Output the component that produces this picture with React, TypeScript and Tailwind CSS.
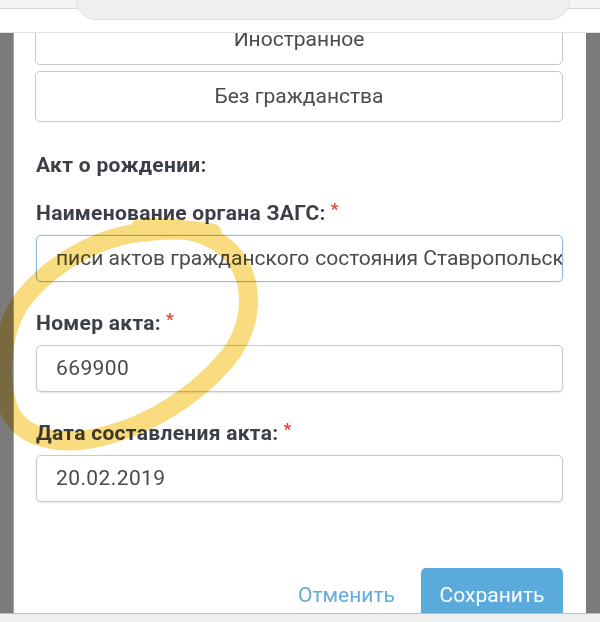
import React from "react";

const font = { fontFamily: "Roboto, 'Noto Sans', sans-serif" };

function Label({ text, required }: { text: string; required?: boolean }) {
    return (
        <div className="h-[28px] flex items-center text-[21px] font-bold text-[#3b4048] leading-none tracking-[0.3px]">
            {text}
            {required && <span className="ml-[5px] text-[#e2463b] text-[17px] self-start mt-[2px]">*</span>}
        </div>
    );
}

function Field({ value }: { value: string }) {
    return (
        <div className="h-[47px] rounded-[5px] border border-[#c6c9cd] shadow-[0_1px_2px_rgba(0,0,0,0.12)] bg-white flex items-center pl-[19px] text-[21px] text-[#4b4b4b] tracking-[0.4px]">
            {value}
        </div>
    );
}

export default function App() {
    return (
        <div className="w-[600px] h-[622px] relative overflow-hidden bg-white flex flex-col" style={font}>
            {/* browser top */}
            <div className="h-[33px] relative bg-white border-b border-[#e2e2e2] shrink-0">
                <div className="h-[9px] bg-[#f4f4f4] border-b border-[#dadada]"></div>
                <div className="absolute left-[76px] w-[494px] top-[-22px] h-[42px] rounded-[20px] bg-[#f0f0f0] border border-[#dedede]"></div>
            </div>

            <div className="flex-1 flex min-h-0">
                <div className="w-[14px] bg-[#7b7b7b] border-r border-[#a4a4a4]"></div>

                {/* modal */}
                <div className="flex-1 bg-white overflow-hidden pl-[22px] pr-[23px]">
                    <div className="mt-[-19px] flex flex-col gap-[6px] -ml-[1px]">
                        <div className="h-[51px] rounded-[5px] border border-[#c4c7cc] flex items-center justify-center text-[21px] text-[#4b4b4b]">
                            Иностранное
                        </div>
                        <div className="h-[51px] rounded-[5px] border border-[#c4c7cc] flex items-center justify-center text-[21px] text-[#4b4b4b]">
                            Без гражданства
                        </div>
                    </div>

                    <div className="mt-[29px]">
                        <Label text="Акт о рождении:" />
                    </div>

                    <div className="mt-[20px]">
                        <Label text="Наименование органа ЗАГС:" required />
                    </div>
                    <div className="mt-[8px] h-[47px] rounded-[5px] border border-[#93bedb] shadow-[0_0_2px_rgba(90,160,210,0.35)] bg-white flex items-center pl-[19px] pr-[7px] text-[21px] text-[#4b4b4b] overflow-hidden whitespace-nowrap">
                        <span>писи актов гражданского</span>
                        <span className="inline-block w-px h-[26px] bg-[#b8cfe0] ml-[1px] mr-[5px]"></span>
                        <span>состояния Ставропольского края</span>
                    </div>

                    <div className="mt-[27px]">
                        <Label text="Номер акта:" required />
                    </div>
                    <div className="mt-[8px]">
                        <Field value="669900" />
                    </div>

                    <div className="mt-[27px]">
                        <Label text="Дата составления акта:" required />
                    </div>
                    <div className="mt-[8px]">
                        <Field value="20.02.2019" />
                    </div>

                    <div className="mt-[66px] flex justify-end items-stretch gap-[26px]">
                        <button className="text-[21px] text-[#62acd9] h-[48px] flex items-center pt-[8px]">Отменить</button>
                        <button className="w-[142px] h-[48px] rounded-t-[5px] bg-[#5aaadc] text-white text-[21px] flex items-center justify-center pt-[8px]">
                            Сохранить
                        </button>
                    </div>
                </div>

                <div className="w-[14px] bg-[#7b7b7b]"></div>
            </div>

            <div className="h-[9px] bg-[#efefef] border-t border-[#bdbdbd] shrink-0"></div>

            {/* highlighter mark */}
            <svg className="absolute inset-0 pointer-events-none mix-blend-multiply" width="600" height="622" viewBox="0 0 600 622">
                <path
                    d="M 140 228 C 185 224, 222 236, 238 262 C 256 292, 250 332, 226 360 C 194 398, 146 426, 104 436 C 66 446, 26 442, 10 412 C -4 378, 2 326, 24 298 C 48 268, 88 242, 130 234 C 165 228, 195 230, 212 233"
                    fill="none"
                    stroke="#f8d35f"
                    strokeOpacity="0.8"
                    strokeWidth="19"
                    strokeLinecap="round"
                />
            </svg>
        </div>
    );
}
